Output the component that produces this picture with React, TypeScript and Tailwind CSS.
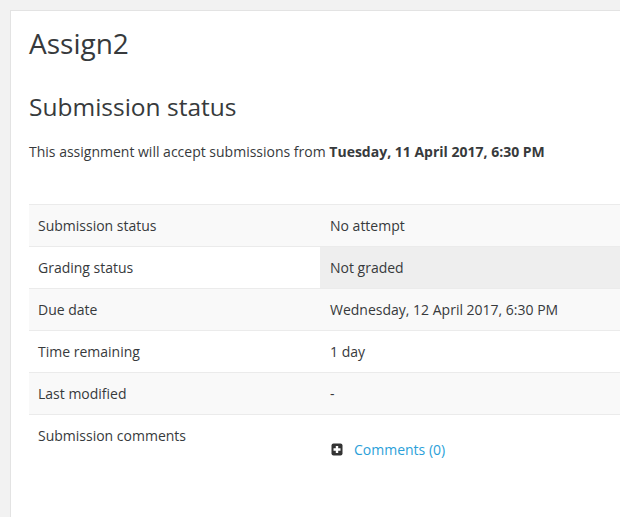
const rows: { label: string; value: string; highlight?: boolean }[] = [
  { label: 'Submission status', value: 'No attempt' },
  { label: 'Grading status', value: 'Not graded', highlight: true },
  { label: 'Due date', value: 'Wednesday, 12 April 2017, 6:30 PM' },
  { label: 'Time remaining', value: '1 day' },
  { label: 'Last modified', value: '-' },
];

function PlusSquare() {
  return (
    <svg width="12" height="13" viewBox="0 0 12 13" className="shrink-0">
      <rect x="0.5" y="0.5" width="11" height="12" rx="2" fill="#333" />
      <path d="M6 3v7M2.5 6.5h7" stroke="#fff" strokeWidth="2.4" />
    </svg>
  );
}

export default function App() {
  return (
    <div
      className="w-[620px] h-[517px] overflow-hidden bg-[#f2f2f2] pt-[10px] pl-[10px] text-[#373a3c]"
      style={{ fontFamily: '"Open Sans", "Noto Sans", sans-serif' }}
    >
      <div className="w-[680px] h-[600px] bg-white border border-[#e3e3e3] pl-[18px] pt-[16px]">
        <h2 className="text-[28px] leading-[33.6px] font-normal">Assign2</h2>
        <h3 className="mt-[31px] text-[24.5px] leading-[29.4px] font-normal">Submission status</h3>
        <p className="mt-[20px] text-[14px] leading-[21px]">
          This assignment will accept submissions from{' '}
          <strong className="font-bold">Tuesday, 11 April 2017, 6:30 PM</strong>
        </p>

        <div className="mt-[42px] w-[640px] text-[14px] leading-[21px]">
          {rows.map((row, i) => (
            <div
              key={row.label}
              className={`flex border-t border-[#ebebeb] ${i % 2 === 0 ? 'bg-[#f9f9f9]' : 'bg-white'}`}
            >
              <div className="w-[291px] shrink-0 px-[9px] py-[10px]">{row.label}</div>
              <div className={`flex-1 pl-[10px] pr-[9px] py-[10px] ${row.highlight ? 'bg-[#eeeeee]' : ''}`}>
                {row.value}
              </div>
            </div>
          ))}
          <div className="flex border-t border-[#ebebeb] bg-white h-[120px]">
            <div className="w-[291px] shrink-0 px-[9px] py-[10px]">Submission comments</div>
            <div className="flex-1 px-[11px] py-[10px]">
              <a href="#" className="mt-[14px] flex items-center gap-[11px] text-[#2b9fd9]">
                <PlusSquare />
                <span>Comments (0)</span>
              </a>
            </div>
          </div>
        </div>
      </div>
    </div>
  );
}
